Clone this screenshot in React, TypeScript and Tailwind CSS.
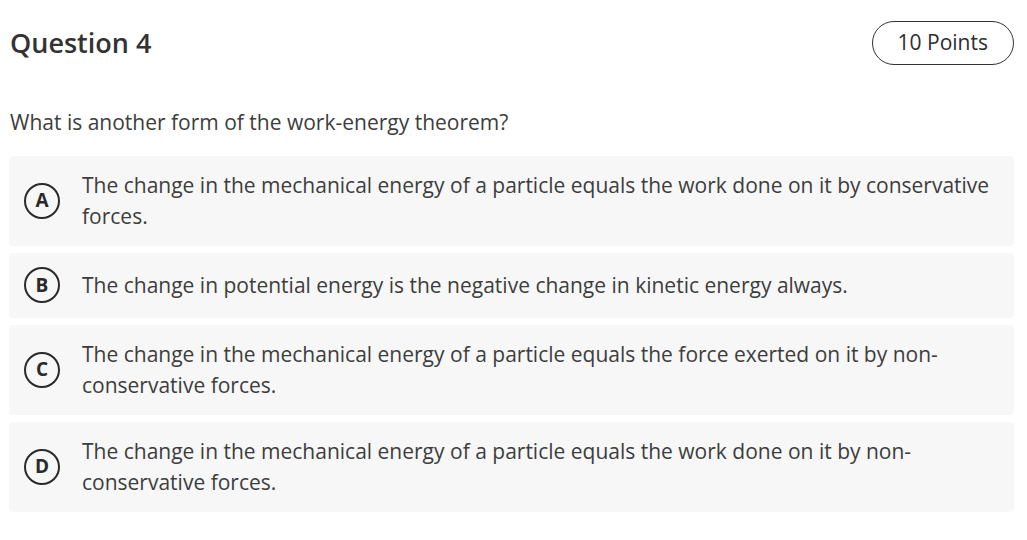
import React from "react";

// ── Data ──────────────────────────────────────────────────────────────────────

interface Option {
  letter: string;
  text:   string;
}

const OPTIONS: Option[] = [
  { letter: "A", text: "The change in the mechanical energy of a particle equals the work done on it by conservative forces." },
  { letter: "B", text: "The change in potential energy is the negative change in kinetic energy always." },
  { letter: "C", text: "The change in the mechanical energy of a particle equals the force exerted on it by non-conservative forces." },
  { letter: "D", text: "The change in the mechanical energy of a particle equals the work done on it by non-conservative forces." },
];

// ── Option row ────────────────────────────────────────────────────────────────

function OptionRow({ letter, text }: Option) {
  return (
    <div className="flex items-center gap-[22px] bg-[#f7f7f7] rounded-[4px] pl-[15px] pr-6 py-[14px] min-h-[65px]">
      <div className="w-[36px] h-[36px] rounded-full border-[2.5px] border-[#2a2a2a] flex items-center justify-center shrink-0 text-[19px] font-bold text-[#2a2a2a] leading-none">
        {letter}
      </div>
      <p className="text-[21px] leading-[31px] text-[#3d3d3d]">{text}</p>
    </div>
  );
}

// ── App ───────────────────────────────────────────────────────────────────────

export default function App() {
  return (
    <div
      className="w-[1027px] h-[540px] bg-white pl-[9px] pr-[13px] pt-[21px]"
      style={{ fontFamily: '"Open Sans", "Liberation Sans", sans-serif' }}
    >
      {/* Header */}
      <div className="flex items-center justify-between">
        <h1 className="pl-px text-[27px] font-semibold text-[#333]">Question 4</h1>
        <span className="h-[44px] px-[25px] rounded-full border border-[#333] flex items-center text-[21px] text-[#2d2d2d]">
          10 Points
        </span>
      </div>

      {/* Question */}
      <p className="mt-[42px] pl-px text-[21px] text-[#3d3d3d]">
        What is another form of the work-energy theorem?
      </p>

      {/* Options */}
      <div className="mt-[17px] flex flex-col gap-[7px]">
        {OPTIONS.map(o => (
          <OptionRow key={o.letter} {...o} />
        ))}
      </div>
    </div>
  );
}
